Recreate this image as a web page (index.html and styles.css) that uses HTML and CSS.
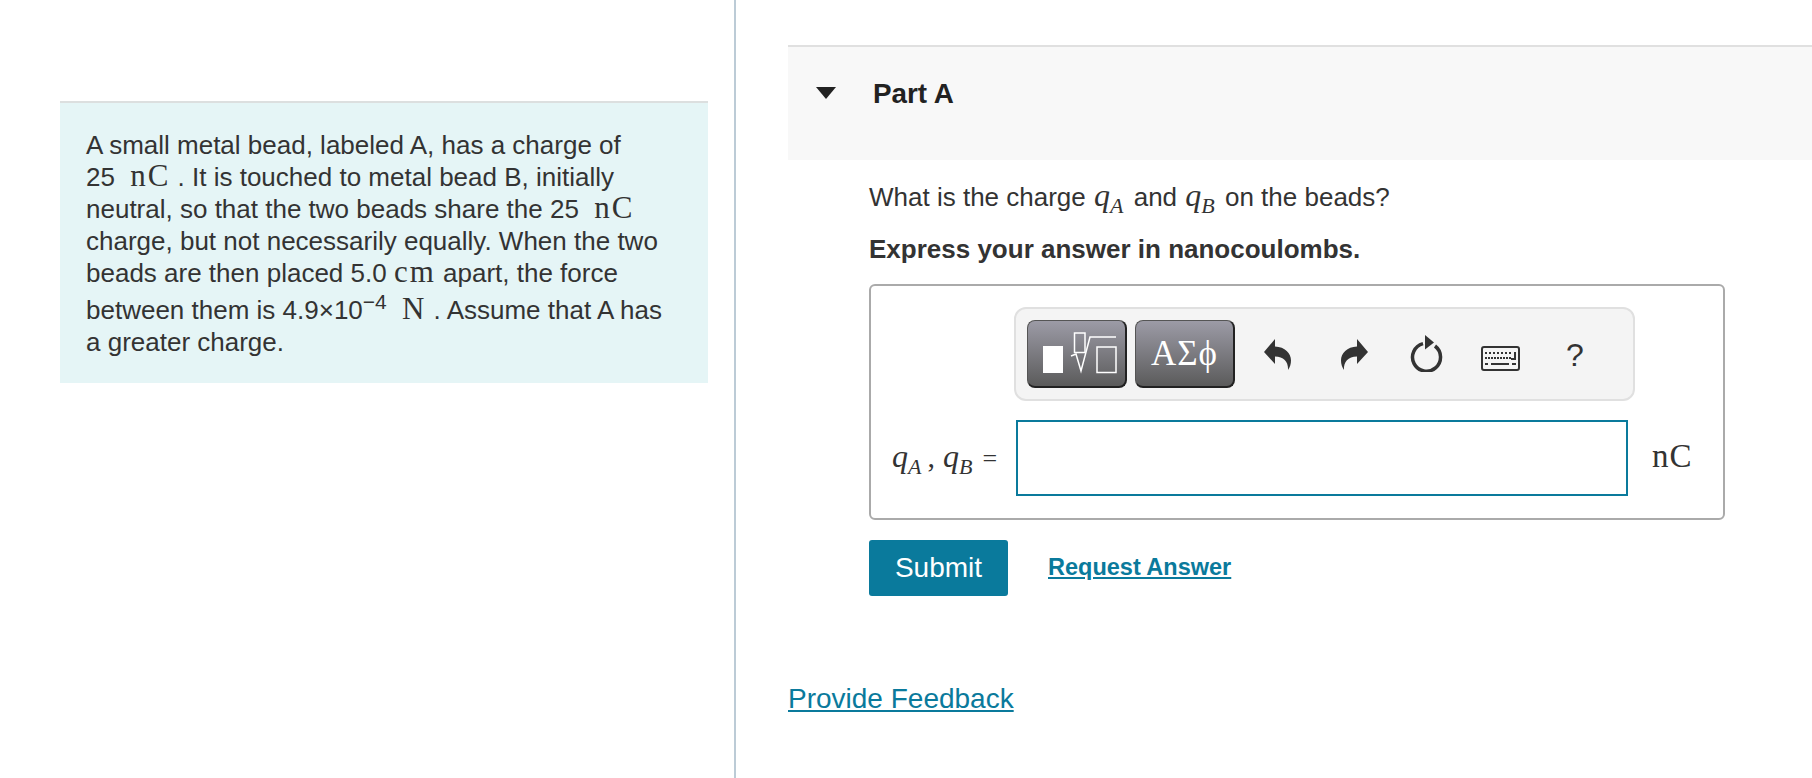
FILE: index.html
```html
<!DOCTYPE html>
<html lang="en">
<head>
  <meta charset="UTF-8" />
  <title>Part A</title>
  <link rel="stylesheet" href="styles.css">
</head>
<body>
  <div class="left-pane">
    <div class="intro">
      <p class="intro-text">A small metal bead, labeled A, has a charge of <span class="nowrap">25 <span class="unit">nC</span></span> . It is touched to metal bead B, initially neutral, so that the two beads share the <span class="nowrap">25 <span class="unit">nC</span></span> charge, but not necessarily equally. When the two beads are then placed 5.0 <span class="unit unit-cm">cm</span> apart, the force between them is <span class="nowrap">4.9×10<sup class="power">−4</sup> <span class="unit">N</span></span> . Assume that A has a greater charge.</p>
    </div>
  </div>

  <div class="right-pane">
    <div class="part-head">
      <span class="caret"></span>
      <h2 class="part-title">Part A</h2>
    </div>

    <div class="part-body">
      <p class="question">What is the charge <span class="math math-inline">q<sub>A</sub></span> and <span class="math math-inline">q<sub>B</sub></span> on the beads?</p>
      <p class="instruction">Express your answer in nanocoulombs.</p>

      <div class="answer-box">
        <div class="toolbar">
          <div class="tool-btn">
            <svg width="100" height="68" viewBox="0 0 100 68">
              <rect x="16" y="26" width="20" height="27" fill="#fff"/>
              <g fill="none" stroke="#fff" stroke-width="1.5">
                <rect x="47.500" y="13" width="10.500" height="19.500"/>
                <path d="M44 36l5-2 5 17 9-34h26"/>
                <rect x="70" y="27" width="19" height="25.500"/>
              </g>
            </svg>
          </div>
          <div class="tool-btn tool-btn-text">ΑΣϕ</div>

          <svg class="icon icon-undo" width="27" height="31" viewBox="0 0 27 31">
            <path fill="#333" d="M0 13L11 0v7.500c10 .5 16 6.500 16 14 0 3.500-1 6.500-3 9.500 .5-8-4-13.500-13-13.500V25z"/>
          </svg>
          <svg class="icon icon-redo" width="27" height="31" viewBox="0 0 27 31">
            <path fill="#333" d="M0 13L11 0v7.500c10 .5 16 6.500 16 14 0 3.500-1 6.500-3 9.500 .5-8-4-13.500-13-13.500V25z"/>
          </svg>
          <svg class="icon icon-reset" width="33" height="37" viewBox="0 0 33 37">
            <path fill="none" stroke="#333" stroke-width="3.500" d="M25 11A14 14 0 1 1 13 8.600"/>
            <path fill="#333" d="M15 0l9 7.500-9 7z"/>
          </svg>
          <svg class="icon icon-keyboard" width="39" height="25" viewBox="0 0 39 25">
            <rect x="1" y="1" width="37" height="23" rx="2" fill="#f4f4f4" stroke="#333" stroke-width="2"/>
            <g fill="none" stroke="#333" stroke-width="2">
              <path d="M4 7h26" stroke-dasharray="2 2"/>
              <path d="M4 12h26" stroke-dasharray="2 1"/>
              <path d="M34 6v7h-4"/>
              <path d="M4 18h3M10 18h18M31 18h4"/>
            </g>
          </svg>
          <span class="help-mark">?</span>
        </div>

        <div class="input-row">
          <label class="input-label"><span class="math">q<sub>A</sub></span><span class="comma">,</span><span class="math">q<sub>B</sub></span><span class="equals">=</span></label>
          <div class="answer-input"></div>
          <span class="input-unit">nC</span>
        </div>
      </div>

      <div class="actions">
        <button class="submit-btn">Submit</button>
        <a class="request-link" href="#">Request Answer</a>
      </div>
    </div>

    <a class="feedback-link" href="#">Provide Feedback</a>
  </div>
</body>
</html>
```

FILE: styles.css
```css
html, body { height: 100%; }
body {
  display: flex;
  margin: 0;
  overflow: hidden;
  background: #fff;
  color: #333;
  font-family: "Liberation Sans", Arial, sans-serif;
  font-size: 26px;
}

.left-pane {
  box-sizing: border-box;
  width: 736px;
  padding: 101px 26px 0 60px;
  border-right: 2px solid #bccbd6;
  flex-shrink: 0;
}
.intro {
  box-sizing: border-box;
  height: 282px;
  background: #e5f5f6;
  border-top: 2px solid #dcdfdf;
  padding: 26px 26px 25px;
}
.intro-text {
  margin: 0;
  line-height: 32px;
}
.nowrap { white-space: nowrap; }
.unit {
  font-family: "Liberation Serif", serif;
  font-size: 31px;
  line-height: 0;
  margin-left: 8px;
  letter-spacing: 2px;
}
.unit-cm { margin-left: 0; }
.power { font-size: 21px; line-height: 26px; }

.right-pane {
  flex-grow: 1;
  padding: 45px 0 0 52px;
}
.part-head {
  display: flex;
  align-items: flex-start;
  height: 113px;
  background: #f8f8f8;
  border-top: 2px solid #e0e0e0;
}
.caret {
  width: 0;
  height: 0;
  margin: 40px 37px 0 28px;
  border-left: 10px solid transparent;
  border-right: 10px solid transparent;
  border-top: 12px solid #222;
}
.part-title {
  margin: 0;
  padding-top: 31px;
  font-size: 27.800px;
  line-height: 32px;
  color: #222;
}

.part-body {
  padding: 21px 87px 0 81px;
}
.question {
  margin: 0;
  line-height: 32px;
}
.instruction {
  margin: 20px 0 0;
  line-height: 32px;
  font-weight: bold;
}
.math {
  font-family: "Liberation Serif", serif;
  font-style: italic;
  font-size: 32px;
  line-height: 0;
}
.math-inline { margin: 0 3px 0 1px; }
.math sub { font-size: 22px; line-height: 0; }

.answer-box {
  box-sizing: border-box;
  height: 236px;
  margin-top: 19px;
  padding: 21px 28px 0 21px;
  border: 2px solid #aaa;
  border-radius: 6px;
}
.toolbar {
  box-sizing: border-box;
  display: flex;
  align-items: center;
  width: 621px;
  height: 94px;
  margin-left: 122px;
  padding-left: 11px;
  background: #f4f4f4;
  border: 2px solid #e0e0e0;
  border-radius: 12px;
}
.tool-btn {
  box-sizing: border-box;
  display: flex;
  align-items: center;
  justify-content: center;
  width: 100px;
  height: 68px;
  margin-right: 8px;
  background: linear-gradient(#9c9ba6, #5b5b5b);
  border: 1px solid #555;
  border-right: 2px solid #222;
  border-bottom: 2px solid #222;
  border-radius: 8px;
}
.tool-btn svg { flex-shrink: 0; }
.tool-btn-text {
  color: #fff;
  font-family: "Liberation Serif", serif;
  font-size: 35px;
  letter-spacing: 1px;
}
.icon { flex-shrink: 0; }
.icon-undo { margin-left: 21px; }
.icon-redo { margin-left: 50px; transform: scaleX(-1); }
.icon-reset { margin-left: 42px; margin-top: -2px; }
.icon-keyboard { margin-left: 38px; margin-top: 9px; }
.help-mark { margin-left: 46px; font-size: 32px; line-height: 32px; margin-top: 2px; }

.input-row {
  display: flex;
  align-items: center;
  margin-top: 19px;
}
.input-label {
  display: flex;
  align-items: baseline;
  width: 124px;
  flex-shrink: 0;
  margin-top: -3px;
}
.comma { margin: 0 8px 0 6px; font-family: "Liberation Serif", serif; font-size: 30px; }
.equals { margin-left: 10px; font-family: "Liberation Serif", serif; font-size: 26px; }
.answer-input {
  box-sizing: border-box;
  width: 612px;
  height: 76px;
  border: 2px solid #0a7a9c;
  background: #fff;
}
.input-unit {
  margin: -4px 0 0 24px;
  font-family: "Liberation Serif", serif;
  font-size: 33px;
  letter-spacing: 1px;
}

.actions {
  display: flex;
  align-items: center;
  margin-top: 20px;
}
.submit-btn {
  width: 139px;
  height: 56px;
  background: #0a7a9c;
  border: none;
  border-radius: 3px;
  color: #fff;
  font-family: "Liberation Sans", Arial, sans-serif;
  font-size: 28px;
}
.request-link {
  margin: -1px 0 0 40px;
  color: #0a7a9c;
  font-size: 23.500px;
  font-weight: bold;
}
.feedback-link {
  display: inline-block;
  margin-top: 87px;
  color: #0a7a9c;
  font-size: 28px;
}
```
